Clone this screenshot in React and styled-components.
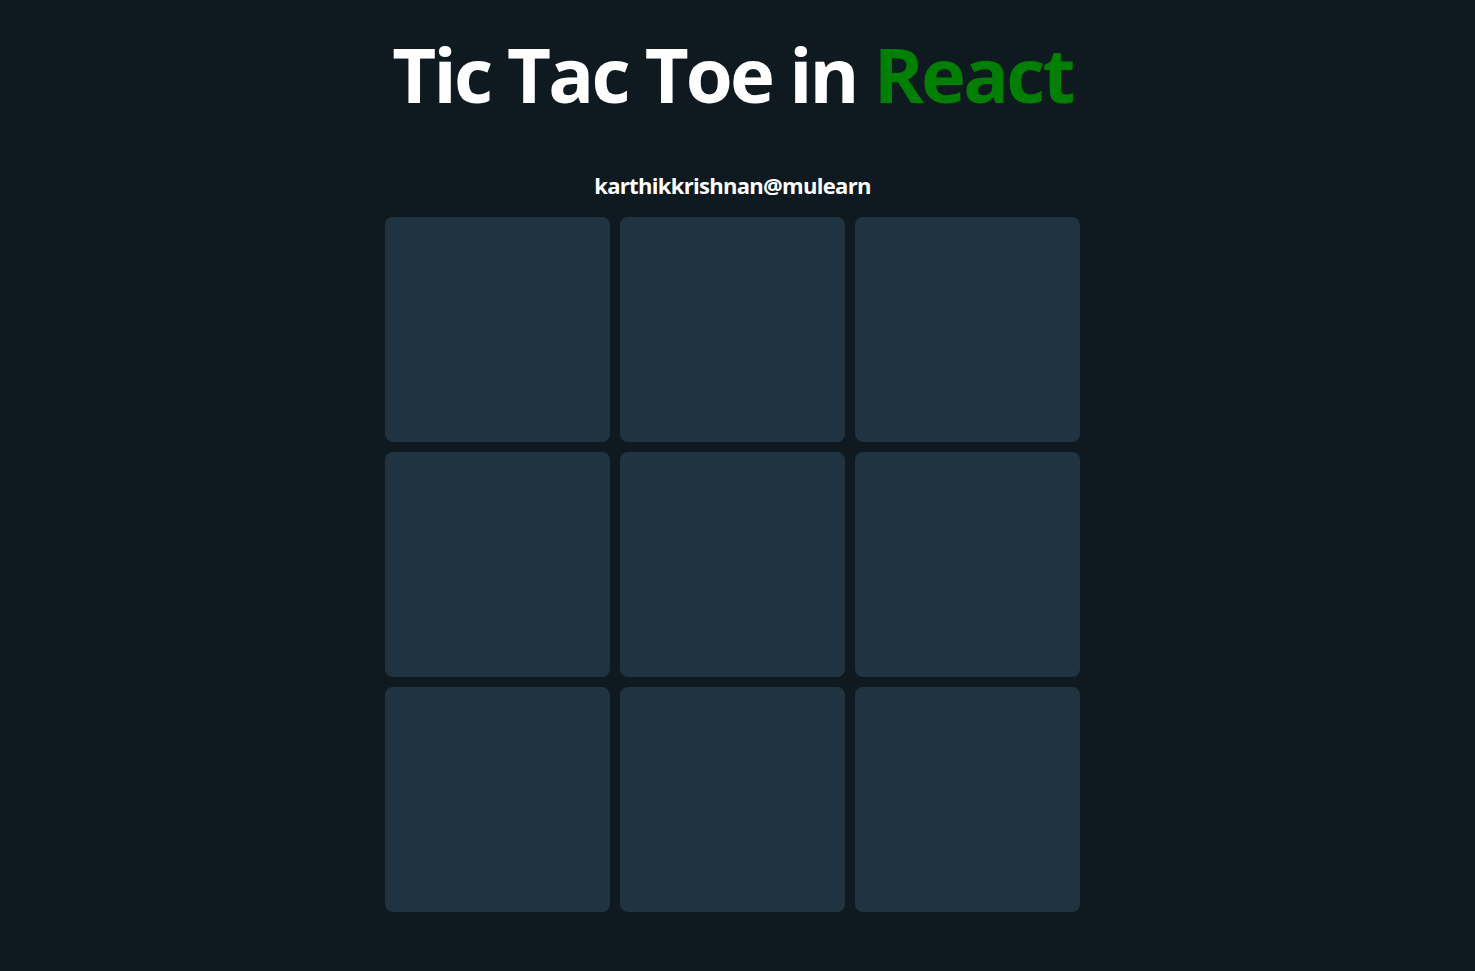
import React from "react";
import styled, { createGlobalStyle } from "styled-components";

const GlobalStyle = createGlobalStyle`
  html, body {
    margin: 0;
    padding: 0;
    background: #0f1a20;
  }
  body {
    font-family: "Open Sans", "Noto Sans", sans-serif;
  }
`;

const Page = styled.div`
  min-height: 971px;
  box-sizing: border-box;
  padding: 0 10px 0 0;
  display: flex;
  flex-direction: column;
  align-items: center;
  background: #0f1a20;
`;

const Title = styled.h1`
  margin: 28px 0 0;
  font-family: "Open Sans", sans-serif;
  font-weight: 700;
  font-size: 76px;
  line-height: 92px;
  color: #ffffff;
  letter-spacing: -2.8px;
`;

const Accent = styled.span`
  color: #008000;
`;

const Author = styled.h3`
  margin: 50px 0 0;
  font-family: "Open Sans", sans-serif;
  font-weight: 700;
  font-size: 22px;
  line-height: 30px;
  color: #ffffff;
  letter-spacing: -0.7px;
`;

const Board = styled.div`
  margin-top: 17px;
  display: grid;
  grid-template-columns: repeat(3, 225px);
  grid-auto-rows: 225px;
  gap: 10px;
`;

const Cell = styled.div`
  background: #1f3440;
  border-radius: 8px;
`;

export default function App() {
  return (
    <>
      <GlobalStyle />
      <Page>
        <Title>
          Tic Tac Toe in <Accent>React</Accent>
        </Title>
        <Author>karthikkrishnan@mulearn</Author>
        <Board>
          {Array.from({ length: 9 }).map((_, i) => (
            <Cell key={i} />
          ))}
        </Board>
      </Page>
    </>
  );
}
